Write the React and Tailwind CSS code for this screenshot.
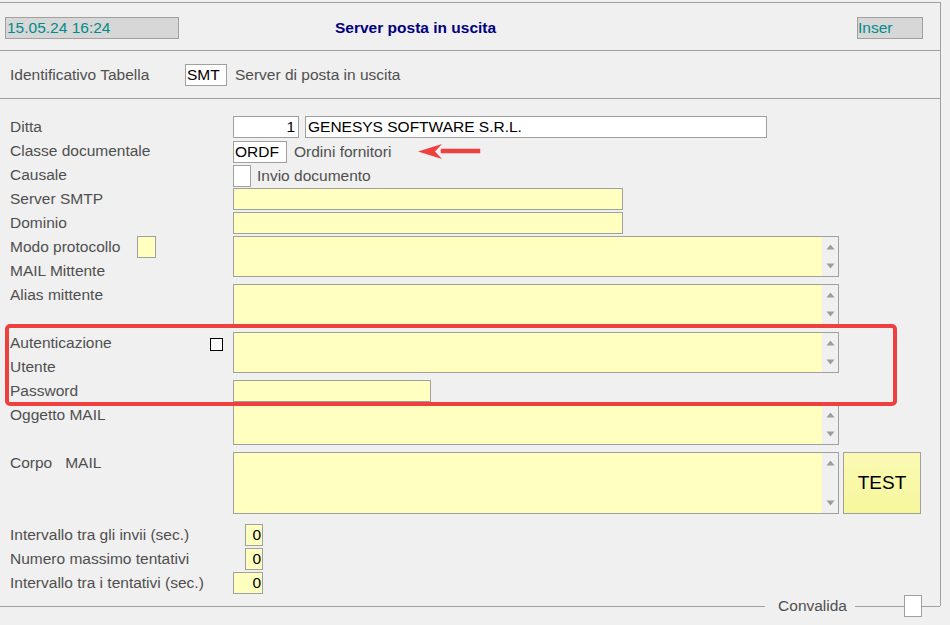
// Server posta in uscita
const font = "font-['Liberation_Sans',Arial,sans-serif]";

function ScrollArrows() {
  return (
    <div className="w-[16px] h-full bg-[#f0f0f0] flex flex-col items-center justify-between py-[7px]">
      <svg width="9" height="6" viewBox="0 0 9 6">
        <path d="M4.5 0.5 L8.5 5.5 L0.5 5.5 Z" fill="#9c9c9c" />
      </svg>
      <svg width="9" height="6" viewBox="0 0 9 6">
        <path d="M0.5 0.5 L8.5 0.5 L4.5 5.5 Z" fill="#9c9c9c" />
      </svg>
    </div>
  );
}

function TextArea({ h = "h-[41px]" }) {
  return (
    <div className={`w-[606px] ${h} border border-[#a0a0a0] bg-[#ffffc0] flex justify-end mt-[1px]`}>
      <ScrollArrows />
    </div>
  );
}

function Label({ children }) {
  return <div className="h-[24px] leading-[24px] text-[#4f4f4f] whitespace-nowrap">{children}</div>;
}

function Row({ labels, field, h = "h-[24px]" }) {
  return (
    <div className={`flex ${h}`}>
      <div className="w-[223px] shrink-0">{labels}</div>
      <div className="flex-1 flex items-start">{field}</div>
    </div>
  );
}

export default function App() {
  return (
    <div className={`${font} text-[15.5px] bg-[#f0f0f0] w-[950px] h-[625px] overflow-hidden relative`}>
      <div className="mt-[2px] w-[941px] border-t border-r border-[#a0a0a0] h-[604px] flex flex-col">
        {/* intestazione */}
        <div className="h-[48px] border-b border-[#a0a0a0] flex items-center pt-[2px] shrink-0">
          <div className="ml-[5px] w-[174px] h-[22px] bg-[#d7d7d7] border border-[#a0a0a0] text-[#008b8b] leading-[20px] pl-[1px]">
            15.05.24 16:24
          </div>
          <div className="ml-[156px] font-bold text-[#000080]">Server posta in uscita</div>
          <div className="ml-auto mr-[17px] w-[66px] h-[22px] bg-[#d7d7d7] border border-[#a0a0a0] text-[#008b8b] leading-[20px]">
            Inser
          </div>
        </div>

        {/* identificativo */}
        <div className="h-[48px] border-b border-[#a0a0a0] flex items-center shrink-0">
          <div className="ml-[10px] w-[175px] text-[#4f4f4f]">Identificativo Tabella</div>
          <div className="w-[42px] h-[22px] bg-white border border-[#a0a0a0] leading-[20px] pl-[1px] text-black">SMT</div>
          <div className="ml-[8px] text-[#4f4f4f]">Server di posta in uscita</div>
        </div>

        {/* corpo del modulo */}
        <div className="pl-[10px] pt-[16px] flex-1 relative">
          <Row
            labels={<Label>Ditta</Label>}
            field={
              <div className="flex gap-[6px] mt-[1px]">
                <div className="w-[66px] h-[22px] bg-white border border-[#a0a0a0] text-right pr-[3px] leading-[20px]">1</div>
                <div className="w-[462px] h-[22px] bg-white border border-[#a0a0a0] pl-[2px] leading-[20px]">GENESYS SOFTWARE S.R.L.</div>
              </div>
            }
          />
          <Row
            labels={<Label>Classe documentale</Label>}
            field={
              <div className="flex items-center mt-[1px]">
                <div className="w-[54px] h-[22px] bg-white border border-[#a0a0a0] pl-[1px] leading-[20px]">ORDF</div>
                <div className="ml-[7px] text-[#4f4f4f]">Ordini fornitori</div>
                <svg className="ml-[27px]" width="64" height="18" viewBox="0 0 64 18">
                  <path d="M61 7 L24 7 L24 9 L61 9 Z" fill="#ef4040" stroke="#ef4040" strokeWidth="2.5" />
                  <path d="M0 8.5 L24 1 L17 8.5 L24 16 Z" fill="#ef4040" />
                </svg>
              </div>
            }
          />
          <Row
            labels={<Label>Causale</Label>}
            field={
              <div className="flex items-center mt-[1px]">
                <div className="w-[18px] h-[22px] bg-white border border-[#a0a0a0]" />
                <div className="ml-[6px] text-[#4f4f4f]">Invio documento</div>
              </div>
            }
          />
          <Row labels={<Label>Server SMTP</Label>} field={<div className="w-[390px] h-[22px] mt-[1px] bg-[#ffffc0] border border-[#a0a0a0]" />} />
          <Row labels={<Label>Dominio</Label>} field={<div className="w-[390px] h-[22px] mt-[1px] bg-[#ffffc0] border border-[#a0a0a0]" />} />
          <Row
            h="h-[48px]"
            labels={
              <>
                <div className="flex items-start">
                  <div className="w-[127px]">
                    <Label>Modo protocollo</Label>
                  </div>
                  <div className="w-[19px] h-[22px] mt-[1px] bg-[#ffffc0] border border-[#a0a0a0]" />
                </div>
                <Label>MAIL Mittente</Label>
              </>
            }
            field={<TextArea />}
          />
          <Row h="h-[48px]" labels={<Label>Alias mittente</Label>} field={<TextArea />} />
          <Row
            h="h-[48px]"
            labels={
              <>
                <div className="flex justify-between items-start pr-[10px]">
                  <Label>Autenticazione</Label>
                  <div className="w-[13px] h-[13px] mt-[7px] bg-white border border-black" />
                </div>
                <Label>Utente</Label>
              </>
            }
            field={<TextArea />}
          />
          <Row labels={<Label>Password</Label>} field={<div className="w-[198px] h-[22px] mt-[1px] bg-[#ffffc0] border border-[#a0a0a0]" />} />
          <Row h="h-[48px]" labels={<Label>Oggetto MAIL</Label>} field={<TextArea />} />
          <Row
            h="h-[72px]"
            labels={<Label>Corpo&nbsp;&nbsp; MAIL</Label>}
            field={
              <div className="flex gap-[4px]">
                <TextArea h="h-[62px]" />
                <div className="w-[78px] h-[62px] mt-[1px] bg-gradient-to-b from-[#fafab4] to-[#f6f69c] border border-[#a0a0a0] flex items-center justify-center text-[19px] text-black">
                  TEST
                </div>
              </div>
            }
          />
          <Row
            labels={<Label>Intervallo tra gli invii (sec.)</Label>}
            field={<div className="ml-[12px] w-[18px] h-[22px] mt-[1px] bg-[#ffffc0] border border-[#a0a0a0] text-right leading-[20px] pr-[1px]">0</div>}
          />
          <Row
            labels={<Label>Numero massimo tentativi</Label>}
            field={<div className="ml-[12px] w-[18px] h-[22px] mt-[1px] bg-[#ffffc0] border border-[#a0a0a0] text-right leading-[20px] pr-[1px]">0</div>}
          />
          <Row
            labels={<Label>Intervallo tra i tentativi (sec.)</Label>}
            field={<div className="w-[30px] h-[22px] mt-[1px] bg-[#ffffc0] border border-[#a0a0a0] text-right leading-[20px] pr-[1px]">0</div>}
          />

          {/* evidenziazione rossa */}
          <div className="absolute left-[5px] top-[225px] w-[892px] h-[82px] border-[4px] border-[#ef4040] rounded-[5px] pointer-events-none" />
        </div>

        {/* bordo inferiore con Convalida */}
        <div className="h-0 flex items-center shrink-0">
          <div className="flex-1 h-px bg-[#a0a0a0]" />
          <div className="pl-[13px] pr-[8px] text-[#4f4f4f]">Convalida</div>
          <div className="w-[49px] h-px bg-[#a0a0a0]" />
          <div className="w-[18px] h-[22px] bg-white border border-[#a0a0a0] shrink-0" />
          <div className="w-[18px] h-px bg-[#a0a0a0]" />
        </div>
      </div>
    </div>
  );
}
